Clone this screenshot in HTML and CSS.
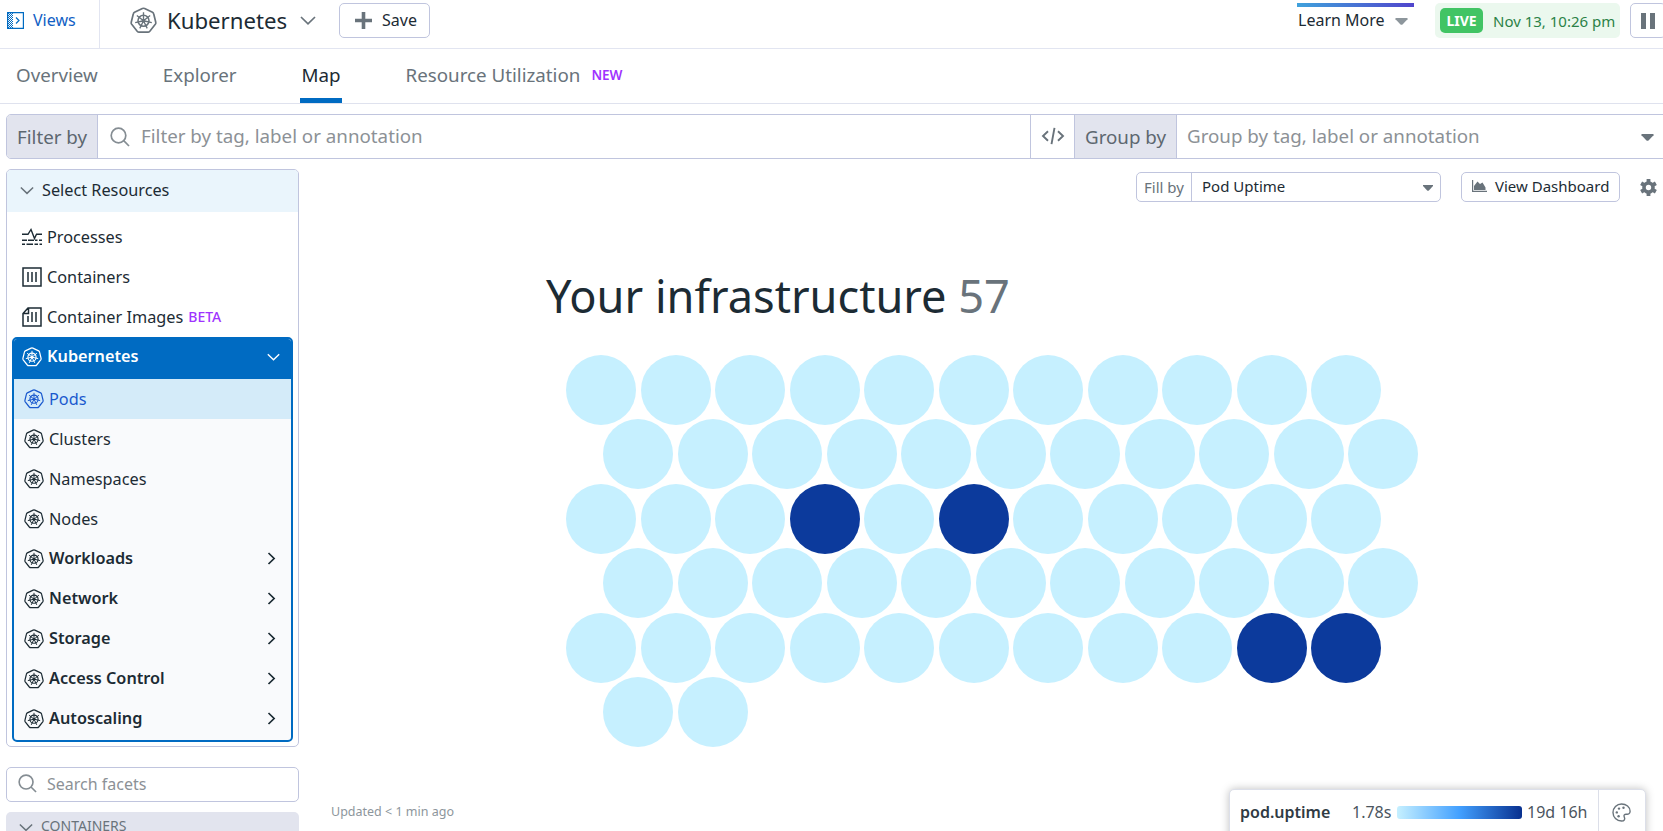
FILE: index.html
```html
<!DOCTYPE html>
<html lang="en">
<head>
<meta charset="utf-8">
<title>Kubernetes Map</title>
<link rel="stylesheet" href="styles.css">
</head>
<body>
<svg class="defs" width="0" height="0" aria-hidden="true">
  <symbol id="k8s" viewBox="0 0 24 24">
    <g fill="none" stroke="currentColor" stroke-linejoin="round">
      <path stroke-width="1.500" d="M11 1.300Q12 .9 13 1.300L20 4.700Q20.900 5.200 21.100 6.200L22.900 13.600Q23.100 14.600 22.500 15.400L17.600 21.600Q16.900 22.400 16 22.400H8Q7.100 22.400 6.400 21.600L1.500 15.400Q.9 14.600 1.100 13.600L2.900 6.200Q3.100 5.200 4 4.700Z"/>
      <circle cx="12" cy="12.200" r="4.900" stroke-width="1.400"/>
      <path stroke-width="1.200" d="M12 12.200V4.600M12 12.200 17.900 7.500M12 12.200 19.400 13.900M12 12.200 15.300 19M12 12.200 8.700 19M12 12.200 4.600 13.900M12 12.200 6.100 7.500"/>
    </g>
    <circle cx="12" cy="12.200" r="1.500" fill="currentColor"/>
  </symbol>
  <symbol id="search" viewBox="0 0 20 20"><g fill="none" stroke="currentColor" stroke-width="1.700"><circle cx="8.500" cy="8.500" r="7.300"/><path d="M13.700 13.700 19 19"/></g></symbol>
  <symbol id="down" viewBox="0 0 16 9"><path d="M1 1 8 7.800 15 1" fill="none" stroke="currentColor" stroke-width="1.700"/></symbol>
  <symbol id="right" viewBox="0 0 8 13"><path d="M1 1 6.600 6.500 1 12" fill="none" stroke="currentColor" stroke-width="1.700"/></symbol>
  <symbol id="caret" viewBox="0 0 12 7"><path d="M0 0H12V1.200L7 6.500Q6 7.200 5 6.500L0 1.200Z" fill="currentColor"/></symbol>
</svg>

<header class="topbar">
  <a class="views">
    <svg class="views-icon" viewBox="0 0 17 17">
      <defs><pattern id="hatch" width="2" height="2" patternUnits="userSpaceOnUse"><path d="M0 0h1v1H0zM1 1h1v1H1z" fill="#006bc2"/></pattern></defs>
      <path d="M1 1H6V16H1Z" fill="url(#hatch)"/>
      <path d="M.6.6H16.400V16.400H.6ZM9 5.500 12 8.500 9 11.500" fill="none" stroke="#006bc2" stroke-width="1.200"/>
    </svg>
    <span>Views</span>
  </a>
  <div class="title">
    <svg class="title-logo"><use href="#k8s"/></svg>
    <h1>Kubernetes</h1>
    <svg class="title-chevron"><use href="#down"/></svg>
  </div>
  <button class="btn save"><svg viewBox="0 0 17 17"><path d="M8.500 0V17M0 8.500H17" stroke="currentColor" stroke-width="3.600"/></svg>Save</button>
  <div class="learn"><span>Learn More</span><svg><use href="#caret"/></svg></div>
  <div class="time"><b>LIVE</b><span>Nov 13, 10:26 pm</span></div>
  <button class="btn pause"><i></i><i></i></button>
</header>

<nav class="tabs">
  <a>Overview</a>
  <a>Explorer</a>
  <a class="active">Map</a>
  <a>Resource Utilization<em>NEW</em></a>
</nav>

<section class="filters">
  <label class="filter-label">Filter by</label>
  <div class="filter-input"><svg><use href="#search"/></svg><span>Filter by tag, label or annotation</span></div>
  <div class="code"><svg viewBox="0 0 24 18"><path d="M7 4.200 2 9 7 13.800M17 4.200 22 9 17 13.800M13.500.8 10.500 17.200" fill="none" stroke="currentColor" stroke-width="1.900"/></svg></div>
  <label class="group-label">Group by</label>
  <div class="group-input"><span>Group by tag, label or annotation</span><svg><use href="#caret"/></svg></div>
</section>

<main class="content">
  <aside class="sidebar">
    <div class="panel">
      <div class="panel-head"><svg><use href="#down"/></svg>Select Resources</div>
      <div class="resources">
        <div class="item"><svg viewBox="0 0 20 20"><g fill="none" stroke="currentColor" stroke-width="1.400"><path d="M0 7.300H6L9 2.500 12.500 11.500 14.500 7.300H20"/><path d="M0 13.300H5M6 13.300H12M13 13.300H15.500M17 13.300H20M0 17.300H3M4.500 17.300H11M12.500 17.300H16M17.500 17.300H20"/></g></svg>Processes</div>
        <div class="item"><svg viewBox="0 0 20 20"><path d="M1 1H19V19H1ZM6 5V15M10 5V15M14 5V15" fill="none" stroke="currentColor" stroke-width="1.500"/></svg>Containers</div>
        <div class="item"><svg viewBox="0 0 20 20"><path d="M6 1H19V19H1V6.500ZM6.500 1V6.500H1M6 9V15M10 5V15M14 5V15" fill="none" stroke="currentColor" stroke-width="1.500"/></svg>Container Images<em>BETA</em></div>
      </div>
      <div class="kube">
        <div class="kube-head"><svg class="k"><use href="#k8s"/></svg><span>Kubernetes</span><svg class="kube-chevron"><use href="#down"/></svg></div>
        <div class="sub selected"><svg class="k"><use href="#k8s"/></svg>Pods</div>
        <div class="sub"><svg class="k"><use href="#k8s"/></svg>Clusters</div>
        <div class="sub"><svg class="k"><use href="#k8s"/></svg>Namespaces</div>
        <div class="sub"><svg class="k"><use href="#k8s"/></svg>Nodes</div>
        <div class="sub group"><svg class="k"><use href="#k8s"/></svg><span>Workloads</span><svg class="more"><use href="#right"/></svg></div>
        <div class="sub group"><svg class="k"><use href="#k8s"/></svg><span>Network</span><svg class="more"><use href="#right"/></svg></div>
        <div class="sub group"><svg class="k"><use href="#k8s"/></svg><span>Storage</span><svg class="more"><use href="#right"/></svg></div>
        <div class="sub group"><svg class="k"><use href="#k8s"/></svg><span>Access Control</span><svg class="more"><use href="#right"/></svg></div>
        <div class="sub group"><svg class="k"><use href="#k8s"/></svg><span>Autoscaling</span><svg class="more"><use href="#right"/></svg></div>
      </div>
    </div>
    <div class="facet-search"><svg><use href="#search"/></svg>Search facets</div>
    <div class="facet-group"><svg><use href="#down"/></svg>CONTAINERS</div>
  </aside>

  <section class="map">
    <div class="map-tools">
      <div class="fill"><label>Fill by</label><div class="fill-select">Pod Uptime<svg><use href="#caret"/></svg></div></div>
      <button class="btn dashboard"><svg viewBox="0 0 15 12"><path d="M.6 0V11.300H15" fill="none" stroke="currentColor" stroke-width="1.200"/><path d="M2 10V6L5.500 1.500 8 4 10.500 2.500 13.500 7.500V10Z" fill="currentColor"/></svg>View Dashboard</button>
      <svg class="gear" viewBox="0 0 17 17"><g fill="none" stroke="currentColor"><circle cx="8.500" cy="8.500" r="4.500" stroke-width="3.600"/><path stroke-width="3.800" d="M8.500 0V3M8.500 14V17M1.140 4.250 3.700 5.750M13.300 11.250 15.860 12.750M1.140 12.750 3.700 11.250M13.300 5.750 15.860 4.250"/></g></svg>
    </div>
    <h2 class="map-title">Your infrastructure <span>57</span></h2>
    <div class="hive">
      <div class="row"><i></i><i></i><i></i><i></i><i></i><i></i><i></i><i></i><i></i><i></i><i></i></div>
      <div class="row"><i></i><i></i><i></i><i></i><i></i><i></i><i></i><i></i><i></i><i></i><i></i></div>
      <div class="row"><i></i><i></i><i></i><i class="old"></i><i></i><i class="old"></i><i></i><i></i><i></i><i></i><i></i></div>
      <div class="row"><i></i><i></i><i></i><i></i><i></i><i></i><i></i><i></i><i></i><i></i><i></i></div>
      <div class="row"><i></i><i></i><i></i><i></i><i></i><i></i><i></i><i></i><i></i><i class="old"></i><i class="old"></i></div>
      <div class="row"><i></i><i></i></div>
    </div>
    <footer class="map-foot">
      <span class="updated">Updated &lt; 1 min ago</span>
      <div class="legend">
        <b>pod.uptime</b><span class="min">1.78s</span><div class="scale"></div><span class="max">19d 16h</span>
        <div class="palette"><svg viewBox="0 0 19 19"><path d="M9.500 1C14.200 1 18.100 4 18.100 8.300C18.100 10.800 16.300 11.400 14.500 11.200C12.500 11 11.400 12.400 12.300 14.100C13.300 16 12.500 18 9.500 18C4.700 18 1 14.200 1 9.500S4.700 1 9.500 1Z" fill="none" stroke="currentColor" stroke-width="1.400"/><g fill="currentColor"><circle cx="4.800" cy="9.400" r="1.200"/><circle cx="7" cy="5.600" r="1.200"/><circle cx="11.500" cy="4.800" r="1.200"/><circle cx="6.600" cy="13.300" r="1.200"/></g></svg></div>
      </div>
    </footer>
  </section>
</main>
</body>
</html>
```

FILE: styles.css
```css
* { box-sizing: border-box; }
body { margin: 0; width: 1663px; height: 831px; overflow: hidden; display: flex; flex-direction: column; background: #fff; color: #1c2b34; font: 16px/20px "Noto Sans", sans-serif; white-space: nowrap; }
h1, h2 { margin: 0; font-weight: 400; }
em { font-style: normal; font-weight: 500; color: #a033ff; }
svg { flex: none; display: block; }
.defs { position: absolute; }
.btn { display: flex; align-items: center; background: #fff; border: 1px solid #c0c5de; border-radius: 5px; color: #1c2b34; font: inherit; padding: 0; }

.topbar { flex: none; height: 49px; display: flex; align-items: flex-start; border-bottom: 1px solid #e2e5f1; }
.topbar > * { flex: none; }
.views { width: 100px; height: 48px; display: flex; align-items: center; gap: 9px; padding: 0 0 7px 7px; border-right: 1px solid #e2e5f1; color: #1060c4; }
.views-icon { width: 17px; height: 17px; }
.views span { margin-top: -1px; }
.title { width: 239px; height: 41px; display: flex; align-items: center; padding-left: 30px; }
.title-logo { width: 27px; height: 27px; color: #69737b; }
.title h1 { width: 119px; margin-left: 10px; font-size: 22.200px; }
.title-chevron { width: 16px; height: 9px; margin-left: 14px; color: #69737b; }
.save { width: 91px; height: 35px; margin-top: 3px; padding: 0 0 1px 15px; gap: 10px; }
.save svg { width: 17px; height: 17px; color: #69737b; }
.learn { width: 117px; height: 40px; margin: 3px 0 0 867px; display: flex; align-items: center; gap: 10px; padding: 0 0 10px 1px; border-top: 4px solid; border-image: linear-gradient(90deg, #3fa2dc, #5044cc) 1 / 4px 0 0; }
.learn svg { width: 13px; height: 7px; margin-top: 2px; color: #8d969c; }
.time { width: 185px; height: 35px; margin: 3px 0 0 21px; display: flex; align-items: center; padding-left: 5px; background: #ebf8ee; border-radius: 5px; color: #2b8247; font-size: 15px; }
.time b { width: 43px; height: 25px; margin-right: 10px; background: #41c464; border-radius: 5px; color: #fff; font-size: 14px; line-height: 25px; text-align: center; }
.pause { width: 36px; height: 35px; margin: 3px 0 0 10px; justify-content: center; gap: 4px; }
.pause i { width: 5px; height: 16px; background: #69737b; }

.tabs { flex: none; height: 55px; display: flex; gap: 65px; padding-left: 16px; border-bottom: 1px solid #dfe2ee; color: #69737b; font-size: 18.750px; }
.tabs a { height: 54px; padding: 16px 0 13px; }
.tabs a:nth-child(3) { width: 42px; margin-left: -2px; padding-left: 2px; border-bottom: 5px solid #006bc2; color: #1c2b34; }
.tabs a:nth-child(4) { margin-left: -1px; }
.tabs em { font-size: 13.500px; font-weight: 600; margin-left: 11px; vertical-align: 2px; line-height: 10px; }

.filters { flex: none; display: flex; width: 1670px; height: 45px; margin: 10px 0 0 6px; border: 1px solid #c0c5de; border-radius: 5px; overflow: hidden; font-size: 18.750px; line-height: 43px; color: #8c9196; }
.filter-label, .group-label { background: #e2e4ee; color: #5d6770; padding: 0 0 0 10px; border-right: 1px solid #c0c5de; }
.filter-label { width: 91px; }
.group-label { width: 102px; }
.filter-input { width: 933px; display: flex; align-items: center; gap: 11px; padding-left: 12px; border-right: 1px solid #c0c5de; }
.filter-input svg { width: 20px; height: 20px; color: #858d93; }
.filter-input span, .group-input span { margin-top: -2px; }
.code { width: 44px; display: flex; align-items: center; justify-content: center; border-right: 1px solid #c0c5de; color: #69737b; }
.code svg { width: 24px; height: 18px; margin-top: -1px; }
.group-input { width: 486px; display: flex; align-items: center; justify-content: space-between; padding: 0 0 0 10px; }
.group-input svg { width: 13px; height: 7px; margin: 2px 9px 0 0; color: #69737b; }

.content { flex: 1; min-height: 0; display: flex; }
.sidebar { width: 299px; flex: none; padding: 10px 0 0 6px; font-size: 16.250px; }
.panel { height: 578px; border: 1px solid #c0c5de; border-radius: 5px; overflow: hidden; }
.panel-head { height: 42px; display: flex; align-items: center; gap: 8px; padding: 0 0 2px 13px; background: #eaf5fc; }
.panel-head svg { width: 14px; height: 9px; color: #69737b; }
.resources { height: 125px; padding: 5px 0 0 15px; }
.item { height: 40px; display: flex; align-items: center; gap: 5px; }
.item svg { width: 20px; height: 20px; }
.item em { font-size: 14px; }
.k { width: 20px; height: 20px; }
.kube { height: 405px; margin: 0 5px; border: 2px solid #006bc2; border-radius: 5px; background: #f9fafc; overflow: hidden; }
.kube-head { height: 40px; display: flex; align-items: center; gap: 5px; padding: 0 11px 4px 8px; background: #006bc2; color: #fff; font-weight: 600; }
.kube-head span { margin-top: -2px; }
.kube-chevron { width: 13px; height: 8px; margin-left: auto; }
.sub { height: 40px; display: flex; align-items: center; gap: 5px; padding: 0 15px 0 10px; }
.selected { background: #d4ebf9; color: #1a59ce; }
.group { font-weight: 600; }
.group span { margin-top: -2px; }
.more { width: 9px; height: 13px; margin: -1px 0 0 auto; }
.facet-search { height: 35px; margin-top: 20px; display: flex; align-items: center; gap: 10px; padding: 0 0 2px 11px; border: 1px solid #c0c5de; border-radius: 5px; color: #8c9196; font-size: 16px; }
.facet-search svg { width: 19px; height: 19px; color: #858d93; }
.facet-group { height: 42px; margin-top: 10px; display: flex; align-items: flex-start; gap: 8px; padding: 4px 0 0 13px; border-radius: 5px 5px 0 0; background: #e2e4ee; color: #69737b; font-size: 14px; }
.facet-group svg { width: 14px; height: 9px; margin-top: 7px; }

.map { width: 1364px; flex: none; display: flex; flex-direction: column; padding-top: 13px; }
.map-tools { flex: none; height: 30px; display: flex; align-items: center; padding-left: 837px; font-size: 15px; }
.fill { width: 305px; height: 30px; display: flex; border: 1px solid #c0c5de; border-radius: 5px; line-height: 28px; }
.fill label { width: 55px; padding: 0 0 0 7px; border-right: 1px solid #c0c5de; color: #69737b; }
.fill-select { flex: 1; display: flex; align-items: center; justify-content: space-between; padding: 0 7px 2px 10px; }
.fill-select svg { width: 10px; height: 6px; margin-top: 4px; color: #69737b; }
.dashboard { width: 159px; height: 30px; margin-left: 20px; padding: 0 0 2px 10px; gap: 8px; }
.dashboard svg { width: 15px; height: 12px; color: #69737b; }
.gear { width: 17px; height: 17px; margin-left: 20px; color: #69737b; }
.map-title { flex: none; height: 60px; margin: 64px 0 0 247px; font-size: 45.150px; line-height: 60px; }
.map-title span { color: #69737b; }
.hive { height: 403px; flex: none; margin: 28.500px 0 0 267px; }
.row { display: flex; gap: 4.500px; margin-bottom: -5.500px; }
.row:nth-child(even) { padding-left: 37.250px; }
.row i { width: 70px; height: 70px; flex: none; border-radius: 50%; background: #c6f0ff; }
.row .old { background: #0c3a9c; }
.map-foot { flex: none; height: 60px; margin-top: 31.500px; display: flex; align-items: flex-start; justify-content: space-between; padding: 0 17px 0 32px; }
.updated { margin-top: 13px; color: #8d969c; font-size: 12.500px; }
.legend { width: 417px; height: 60px; display: flex; align-items: flex-start; border: 1px solid #dcdfe9; border-radius: 5px; box-shadow: 0 0 8px rgba(0, 0, 0, .25); padding: 12px 0 0 10px; color: #4b555e; background: #fff; }
.legend b { width: 112px; color: #303b44; font-weight: 600; }
.min { width: 45px; }
.scale { width: 125px; height: 13px; margin: 4px 5px 0 0; border-radius: 3px; background: linear-gradient(90deg, #c6f0ff, #42a0ff 50%, #08308f); }
.max { width: 71px; }
.palette { height: 60px; margin-top: -12px; padding: 13px 0 0 13px; border-left: 1px solid #dcdfe9; }
.palette svg { width: 19px; height: 19px; color: #69737b; }
```
